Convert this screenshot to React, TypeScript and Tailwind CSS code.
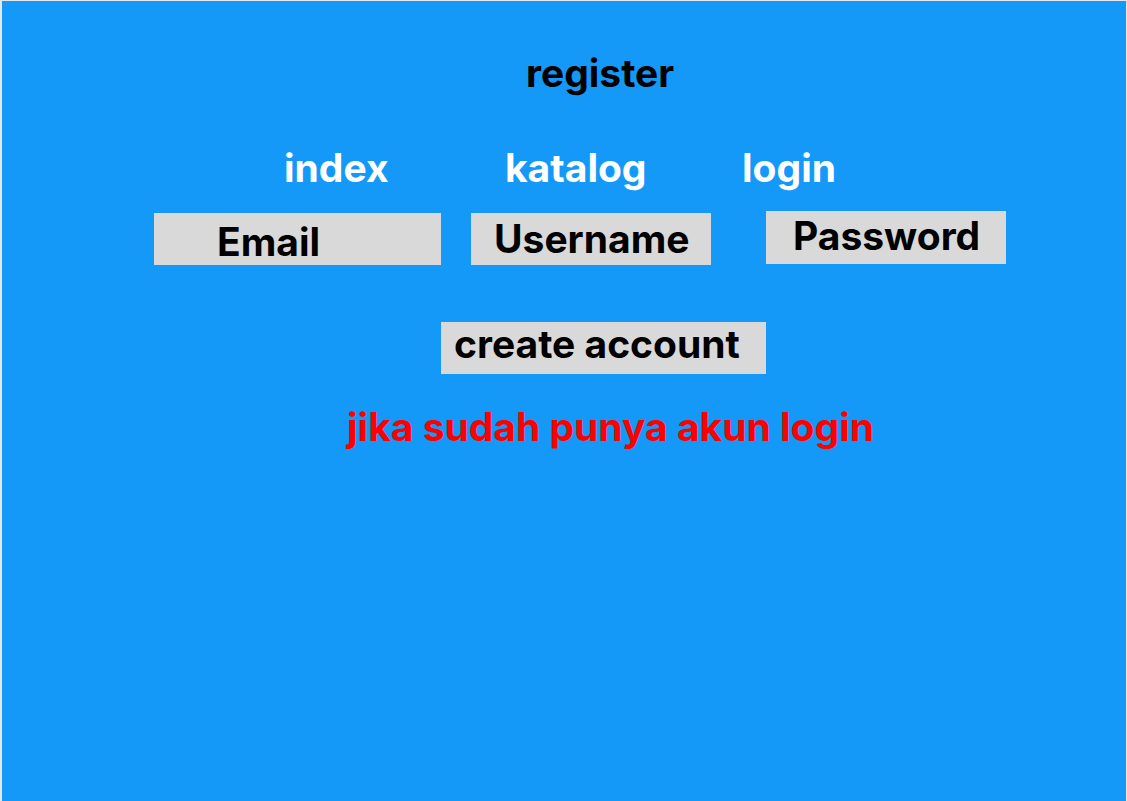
import React from 'react'

const Page = () => {
  return (
    <div className="min-h-screen w-full bg-[#1499f9] border-t border-l-2 border-r border-[#e6e6e6] font-['Inter','Noto_Sans',sans-serif] font-bold">
      {/* Title */}
      <div className="pt-[48px] pl-[524px]">
        <h1 className="text-[39px] leading-[48px] text-black">register</h1>
      </div>

      {/* Nav */}
      <nav className="mt-[47px] flex pl-[282px] text-[39px] leading-[48px] text-white">
        <a href="#" className="w-[221px]">index</a>
        <a href="#" className="w-[237px]">katalog</a>
        <a href="#">login</a>
      </nav>

      {/* Inputs */}
      <div className="mt-[19px] flex items-start pl-[152px] text-[39px] leading-[48px] text-black">
        <div className="mt-[2px] h-[52px] w-[287px] bg-[#d9d9d9] pl-[63px] pt-[5px]">Email</div>
        <div className="ml-[30px] mt-[2px] h-[52px] w-[240px] bg-[#d9d9d9] pl-[23px] pt-[2px]">Username</div>
        <div className="ml-[55px] h-[53px] w-[240px] bg-[#d9d9d9] pl-[27px] pt-[1px]">Password</div>
      </div>

      {/* Submit */}
      <div className="mt-[57px] pl-[439px]">
        <button className="block h-[52px] w-[325px] bg-[#d9d9d9] pl-[13px] pb-[8px] text-left text-[39px] leading-[40px] text-black">
          create account
        </button>
      </div>

      {/* Login hint */}
      <div className="mt-[29px] pl-[345px]">
        <a href="#" className="text-[39px] leading-[48px] text-[#ff0000]">jika sudah punya akun login</a>
      </div>
    </div>
  )
}

export default Page
